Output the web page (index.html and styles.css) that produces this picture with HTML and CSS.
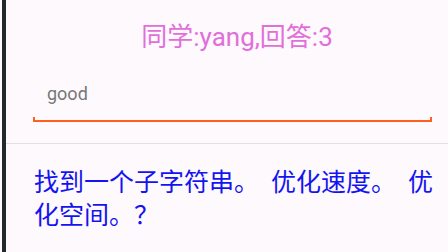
FILE: index.html
```html
<!DOCTYPE html>
<html lang="zh">
<head>
<meta charset="utf-8">
<link rel="stylesheet" href="styles.css">
</head>
<body>
<div class="screen">
  <div class="edge"></div>
  <div class="content">
    <div class="title">同学:yang,回答:3</div>
    <div class="field">
      <div class="field-text">good</div>
      <div class="underline"></div>
    </div>
    <div class="divider"></div>
    <p class="question">找到一个子字符串<span class="stop">。</span>优化速度<span class="stop">。</span>优化空间。？</p>
  </div>
</div>
</body>
</html>
```
FILE: styles.css
```css
html, body {
  margin: 0;
  padding: 0;
}
body {
  width: 448px;
  height: 252px;
  overflow: hidden;
  background: #fdf9fd;
  font-family: Roboto, "Noto Sans CJK SC", sans-serif;
}
.screen {
  display: flex;
  height: 252px;
  padding-left: 2px;
}
.edge {
  width: 4px;
  flex: none;
  background: #23282d;
}
.content {
  flex: 1;
  display: flex;
  flex-direction: column;
}
.title {
  padding-top: 22px;
  padding-left: 20px;
  height: 30px;
  line-height: 30px;
  font-size: 26px;
  color: #e26fd9;
  text-align: center;
}
.field {
  margin-top: 30px;
  margin-left: 27px;
  width: 399px;
}
.field-text {
  padding-left: 14px;
  padding-bottom: 11px;
  height: 24px;
  line-height: 24px;
  font-size: 18px;
  color: #777777;
}
.underline {
  height: 3px;
  border: 2px solid #ff5f1f;
  border-top: none;
}
.divider {
  margin-top: 21px;
  height: 1px;
  background: #e2e0e2;
}
.question {
  margin: 0;
  padding-top: 20px;
  padding-left: 28px;
  width: 406px;
  font-family: "Noto Sans CJK SC", sans-serif;
  font-size: 25px;
  line-height: 33px;
  color: #1414f0;
}
.stop {
  margin-right: 12px;
}
```
